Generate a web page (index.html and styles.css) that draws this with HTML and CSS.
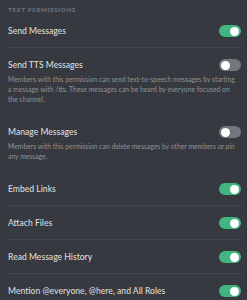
FILE: index.html
```html
<!DOCTYPE html>
<html>
<head>
<meta charset="utf-8">
<link rel="stylesheet" href="styles.css">
</head>
<body>
<div class="panel">
  <div class="header">Text Permissions</div>
  <div class="item divider">
    <div class="row"><span class="title">Send Messages</span><span class="toggle on"></span></div>
  </div>
  <div class="item">
    <div class="row"><span class="title">Send TTS Messages</span><span class="toggle"></span></div>
    <div class="desc">Members with this permission can send text-to-speech messages by starting a message with /tts. These messages can be heard by everyone focused on the channel.</div>
  </div>
  <div class="item">
    <div class="row"><span class="title">Manage Messages</span><span class="toggle"></span></div>
    <div class="desc">Members with this permission can delete messages by other members or pin any message.</div>
  </div>
  <div class="item divider">
    <div class="row"><span class="title">Embed Links</span><span class="toggle on"></span></div>
  </div>
  <div class="item divider">
    <div class="row"><span class="title">Attach Files</span><span class="toggle on"></span></div>
  </div>
  <div class="item divider">
    <div class="row"><span class="title">Read Message History</span><span class="toggle on"></span></div>
  </div>
  <div class="item">
    <div class="row"><span class="title">Mention @everyone, @here, and All Roles</span><span class="toggle on"></span></div>
  </div>
</div>
</body>
</html>
```
FILE: styles.css
```css
html, body {
  margin: 0;
  padding: 0;
  background: #36393f;
  height: 100%;
  overflow: hidden;
}
.panel {
  padding: 6px 6px 0 8px;
  font-family: Lato, "Open Sans", sans-serif;
}
.header {
  height: 8px;
  line-height: 8px;
  font-size: 6.3px;
  font-weight: 700;
  letter-spacing: 0.6px;
  text-transform: uppercase;
  color: #72767d;
}
.item {
  padding: 11px 0 10px;
  border-bottom: 1px solid transparent;
}
.item.divider {
  border-bottom-color: #42454b;
}
.row {
  display: flex;
  align-items: center;
  justify-content: space-between;
  height: 12px;
}
.title {
  font-size: 8.6px;
  font-weight: 500;
  color: #dcddde;
  white-space: nowrap;
}
.toggle {
  position: relative;
  width: 22px;
  height: 12px;
  border-radius: 6px;
  background: #72767d;
  flex: none;
}
.toggle::after {
  content: "";
  position: absolute;
  top: 1.5px;
  left: 2px;
  width: 9px;
  height: 9px;
  border-radius: 50%;
  background: #ffffff;
}
.toggle.on {
  background: #43b581;
}
.toggle.on::after {
  left: auto;
  right: 2px;
}
.desc {
  margin-top: 3px;
  padding-right: 3px;
  font-size: 6.8px;
  line-height: 10px;
  color: #8e9297;
}
```
